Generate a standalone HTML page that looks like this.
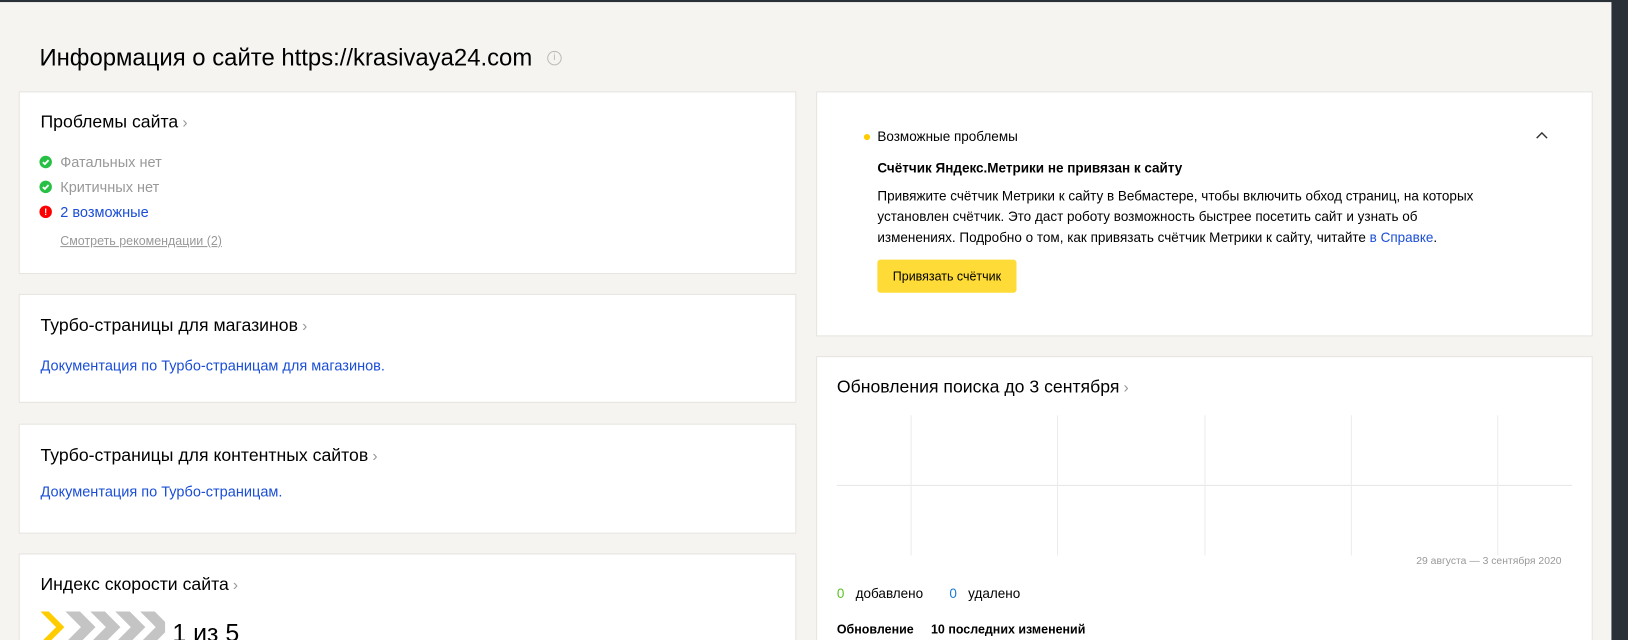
<!DOCTYPE html>
<html><head><meta charset="utf-8"><style>
*{margin:0;padding:0;box-sizing:border-box}
html,body{width:1628px;height:640px;overflow:hidden}
body{background:#2a3038;font-family:"Liberation Sans",Arial,sans-serif;position:relative}
.wrap{position:absolute;left:0;top:0;width:1568px;height:617px;overflow:hidden;transform:scale(1.0383);transform-origin:0 0}
.page{position:absolute;left:0;top:2px;width:1552px;height:700px;background:#f5f4f1}
.card{position:absolute;background:#fff;border:1px solid #e6e3de}
.t{position:absolute;font-size:17px;color:#000;white-space:nowrap}
.ch{color:#999;font-size:15px;margin-left:4px}
.a{position:absolute;font-size:14px;white-space:nowrap}
.blue{color:#1a4ed6}
.g{color:#999}
.ic{position:absolute;width:12px;height:12px;border-radius:50%;color:#fff;font-size:9px;font-weight:bold;text-align:center;line-height:12px}
.vl{position:absolute;height:135px;width:1px;background:#ececec}
</style></head><body>
<div class="wrap"><div class="page">
<div class="t" style="left:38px;top:40px;font-size:23px">Информация о сайте https://krasivaya24.com</div>
<div style="position:absolute;left:527px;top:47px;width:14px;height:14px;border:1px solid #bbb;border-radius:50%;color:#bbb;font-size:10px;text-align:center;line-height:12px">i</div>

<div class="card" style="left:18px;top:86px;width:749px;height:176px">
 <div class="t" style="left:20px;top:19px">Проблемы сайта<span class="ch">›</span></div>
 <div class="ic" style="left:19px;top:61px;background:#26c144"><svg width="12" height="12"><path d="M3.3 6.2 L5.2 8 L8.8 4.2" stroke="#fff" stroke-width="1.8" fill="none"/></svg></div>
 <div class="a g" style="left:39px;top:59px">Фатальных нет</div>
 <div class="ic" style="left:19px;top:85px;background:#26c144"><svg width="12" height="12"><path d="M3.3 6.2 L5.2 8 L8.8 4.2" stroke="#fff" stroke-width="1.8" fill="none"/></svg></div>
 <div class="a g" style="left:39px;top:83px">Критичных нет</div>
 <div class="ic" style="left:19px;top:109px;background:#f00">!</div>
 <div class="a blue" style="left:39px;top:107px">2 возможные</div>
 <div class="a g" style="left:39px;top:136px;font-size:12px;text-decoration:underline">Смотреть рекомендации (2)</div>
</div>
<div class="card" style="left:18px;top:281px;width:749px;height:105px">
 <div class="t" style="left:20px;top:20px">Турбо-страницы для магазинов<span class="ch">›</span></div>
 <div class="a blue" style="left:20px;top:60px">Документация по Турбо-страницам для магазинов.</div>
</div>
<div class="card" style="left:18px;top:406px;width:749px;height:106px">
 <div class="t" style="left:20px;top:20px">Турбо-страницы для контентных сайтов<span class="ch">›</span></div>
 <div class="a blue" style="left:20px;top:56px">Документация по Турбо-страницам.</div>
</div>
<div class="card" style="left:18px;top:531px;width:749px;height:140px">
 <div class="t" style="left:20px;top:19px">Индекс скорости сайта<span class="ch">›</span></div>
 <svg style="position:absolute;left:20px;top:55px" width="120" height="30">
  <polygon points="0,0 8,0 23,15 8,30 0,30 15,15" fill="#fc0"/>
  <polygon points="24,0 38,0 53,15 38,30 24,30 39,15" fill="#c4c4c4"/>
  <polygon points="48,0 62,0 77,15 62,30 48,30 63,15" fill="#c4c4c4"/>
  <polygon points="72,0 86,0 101,15 86,30 72,30 87,15" fill="#c4c4c4"/>
  <polygon points="96,0 110,0 125,15 110,30 96,30 111,15" fill="#c4c4c4"/>
 </svg>
 <div class="t" style="left:147px;top:63px;font-size:24px">1 из 5</div>
</div>

<div class="card" style="left:786px;top:86px;width:748px;height:236px">
 <div style="position:absolute;left:45px;top:40px;width:6px;height:6px;border-radius:50%;background:#fc0"></div>
 <div class="a" style="left:58px;top:35px;font-size:13px;color:#000">Возможные проблемы</div>
 <svg style="position:absolute;left:692px;top:37px" width="12" height="8"><path d="M1 7 L6 2 L11 7" stroke="#333" stroke-width="1.4" fill="none"/></svg>
 <div class="a" style="left:58px;top:65px;font-size:13px;font-weight:bold;color:#000">Счётчик Яндекс.Метрики не привязан к сайту</div>
 <div style="position:absolute;left:58px;top:90px;width:590px;font-size:13px;line-height:20px;color:#000">Привяжите счётчик Метрики к сайту в Вебмастере, чтобы включить обход страниц, на которых установлен счётчик. Это даст роботу возможность быстрее посетить сайт и узнать об изменениях. Подробно о том, как привязать счётчик Метрики к сайту, читайте <span class="blue">в Справке</span>.</div>
 <div style="position:absolute;left:58px;top:161px;width:134px;height:32px;background:#fedb36;border-radius:3px;font-size:12px;line-height:32px;text-align:center;color:#000">Привязать счётчик</div>
</div>
<div class="card" style="left:786px;top:341px;width:748px;height:340px">
 <div class="t" style="left:19px;top:19px">Обновления поиска до 3 сентября<span class="ch">›</span></div>
</div>
<div style="position:absolute;left:806px;top:465px;width:708px;height:1px;background:#e6e6e6"></div>
<div class="vl" style="left:877px;top:398px"></div>
<div class="vl" style="left:1018px;top:398px"></div>
<div class="vl" style="left:1160px;top:398px"></div>
<div class="vl" style="left:1301px;top:398px"></div>
<div class="vl" style="left:1442px;top:398px"></div>
<div class="a g" style="left:1364px;top:533px;font-size:10px">29 августа — 3 сентября 2020</div>
<div class="a" style="left:806px;top:562px;font-size:13px"><span style="color:#5ac322">0</span>&nbsp;&nbsp; добавлено &nbsp;&nbsp;&nbsp;&nbsp;&nbsp;&nbsp;<span style="color:#1a7ad6">0</span>&nbsp;&nbsp; удалено</div>
<div class="a" style="left:806px;top:597px;font-size:12px;font-weight:bold">Обновление &nbsp;&nbsp;&nbsp; 10 последних изменений</div>
</div></div>
</body></html>
